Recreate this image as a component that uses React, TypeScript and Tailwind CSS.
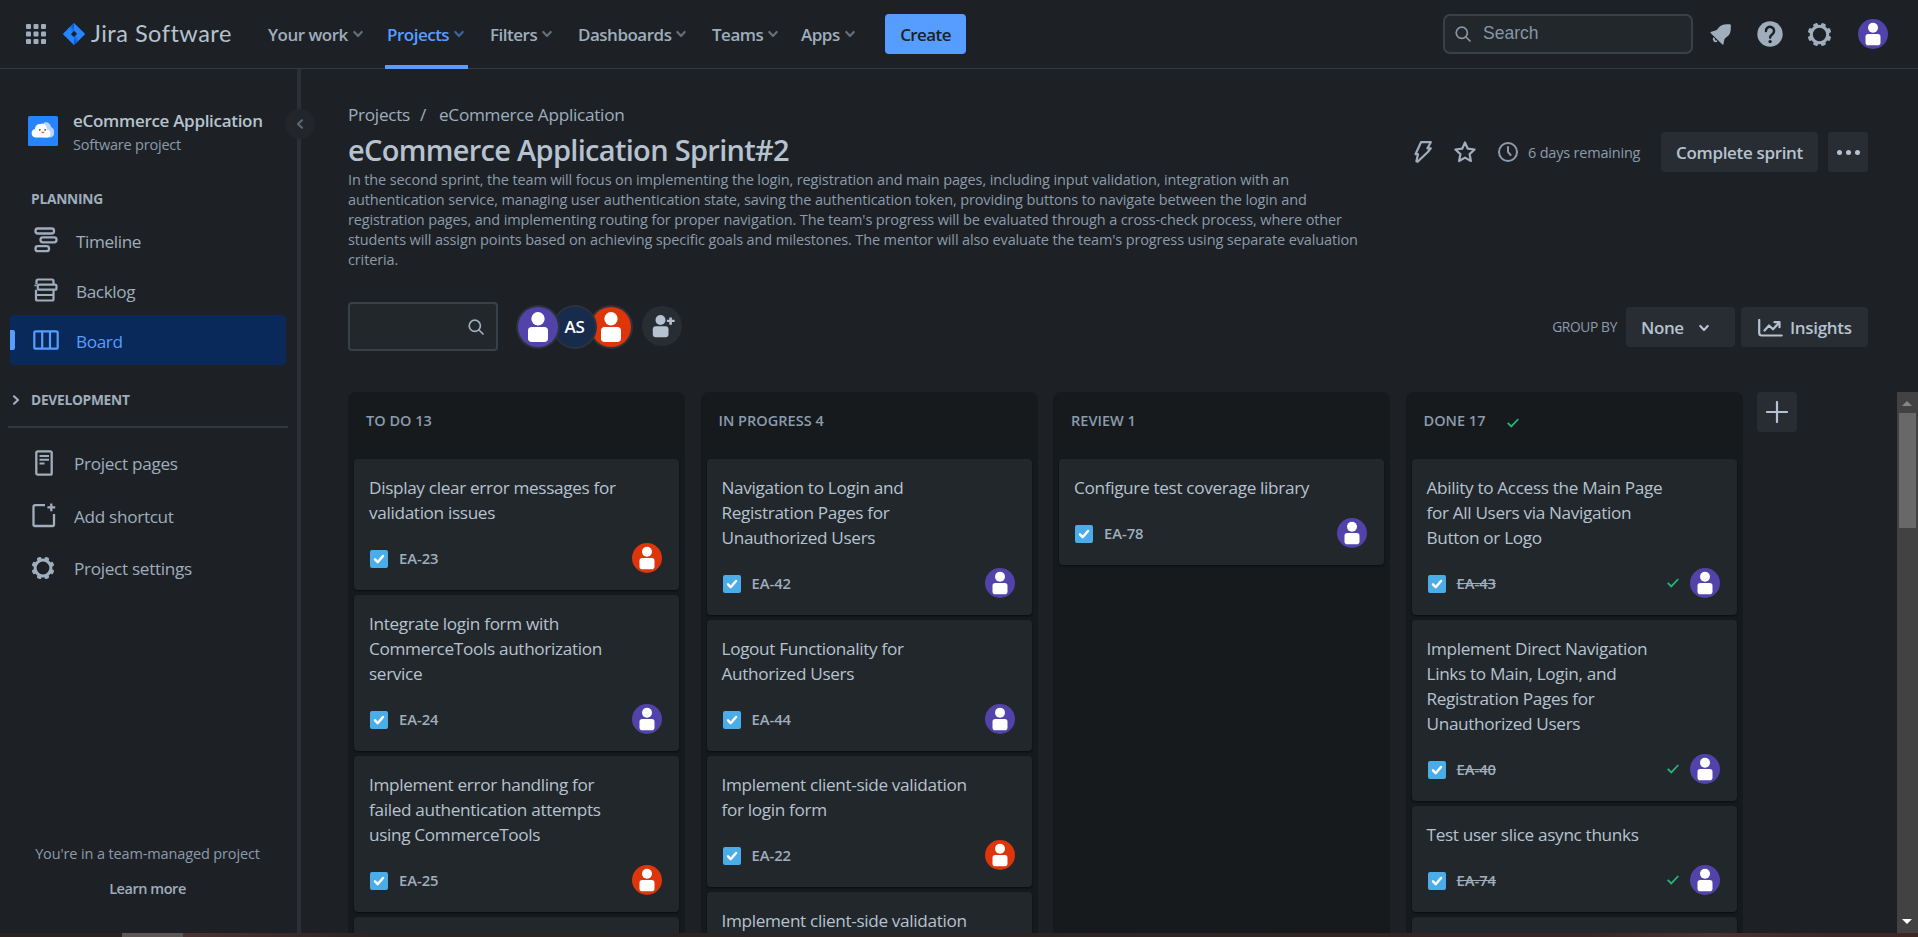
import React from 'react';

type Tone = 'purple' | 'red';

interface Issue {
  lines: string[];
  id: string;
  tone?: Tone;
}

interface BoardColumn {
  title: string;
  done?: boolean;
  issues: Issue[];
}

const columns: BoardColumn[] = [
  {
    title: 'TO DO 13',
    issues: [
      { lines: ['Display clear error messages for', 'validation issues'], id: 'EA-23', tone: 'red' },
      { lines: ['Integrate login form with', 'CommerceTools authorization', 'service'], id: 'EA-24', tone: 'purple' },
      { lines: ['Implement error handling for', 'failed authentication attempts', 'using CommerceTools'], id: 'EA-25', tone: 'red' },
      { lines: [''], id: '' },
    ],
  },
  {
    title: 'IN PROGRESS 4',
    issues: [
      { lines: ['Navigation to Login and', 'Registration Pages for', 'Unauthorized Users'], id: 'EA-42', tone: 'purple' },
      { lines: ['Logout Functionality for', 'Authorized Users'], id: 'EA-44', tone: 'purple' },
      { lines: ['Implement client-side validation', 'for login form'], id: 'EA-22', tone: 'red' },
      { lines: ['Implement client-side validation'], id: '' },
    ],
  },
  {
    title: 'REVIEW 1',
    issues: [{ lines: ['Configure test coverage library'], id: 'EA-78', tone: 'purple' }],
  },
  {
    title: 'DONE 17',
    done: true,
    issues: [
      { lines: ['Ability to Access the Main Page', 'for All Users via Navigation', 'Button or Logo'], id: 'EA-43', tone: 'purple' },
      {
        lines: ['Implement Direct Navigation', 'Links to Main, Login, and', 'Registration Pages for', 'Unauthorized Users'],
        id: 'EA-40',
        tone: 'purple',
      },
      { lines: ['Test user slice async thunks'], id: 'EA-74', tone: 'purple' },
      { lines: [''], id: '' },
    ],
  },
];

function Avatar({ tone, className = '' }: { tone: Tone; className?: string }) {
  return (
    <svg viewBox="0 0 30 30" className={`shrink-0 ${className}`}>
      <circle cx="15" cy="15" r="15" fill={tone === 'purple' ? '#5243aa' : '#de350b'} />
      <circle cx="15" cy="8.8" r="5" fill="#fff" />
      <rect x="7.5" y="15" width="15" height="11.2" rx="2.8" fill="#fff" />
    </svg>
  );
}

function Chevron({ className = '' }: { className?: string }) {
  return (
    <svg viewBox="0 0 10 8" className={`h-[8px] w-[10px] shrink-0 ${className}`} fill="none" stroke="currentColor" strokeWidth="2.2" strokeLinecap="round" strokeLinejoin="round">
      <path d="M1.3 2l3.7 4 3.7-4" />
    </svg>
  );
}

function SearchIcon({ className = '' }: { className?: string }) {
  return (
    <svg viewBox="0 0 16 16" className={`h-4 w-4 shrink-0 ${className}`} fill="none" stroke="currentColor" strokeWidth="1.7" strokeLinecap="round">
      <circle cx="6.8" cy="6.8" r="5.6" />
      <path d="M11 11l4 4" />
    </svg>
  );
}

function GearIcon({ className = '' }: { className?: string }) {
  return (
    <svg viewBox="0 0 24 24" className={`shrink-0 ${className}`} fill="currentColor">
      <g>
        {[22.5, 67.5, 112.5, 157.5, 202.5, 247.5, 292.5, 337.5].map((angle) => (
          <rect key={angle} x="9.7" y="0.6" width="4.6" height="4.6" rx="1.3" transform={`rotate(${angle} 12 12)`} />
        ))}
      </g>
      <circle cx="12" cy="12" r="7.9" fill="none" stroke="currentColor" strokeWidth="3" />
    </svg>
  );
}

function GreenCheck() {
  return (
    <svg viewBox="0 0 12 10" className="h-[10px] w-[12px] shrink-0" fill="none" stroke="#27b47a" strokeWidth="1.8">
      <path d="M0.7 4.8l3.6 3.6L11.3 1" />
    </svg>
  );
}

function TaskIcon() {
  return (
    <svg viewBox="0 0 18 18" className="relative top-px h-[18px] w-[18px] shrink-0">
      <rect width="18" height="18" rx="2" fill="#4bade8" />
      <path d="M5 9.3l2.7 2.9L13 6" fill="none" stroke="#fff" strokeWidth="2.5" strokeLinecap="round" strokeLinejoin="round" />
    </svg>
  );
}

function IssueCard({ issue, done }: { issue: Issue; done?: boolean }) {
  return (
    <article className="mb-[5px] shrink-0 rounded-[4px] bg-[#22272b] pt-4 pr-[17px] pb-[17px] pl-4 shadow-[0_1px_2px_rgba(3,4,4,0.6)]">
      <div className="-ml-px text-[17.2px] leading-[25px] tracking-[-0.34px] text-[#b6c2cf]">
        {issue.lines.map((line, i) => (
          <div key={i} className="h-[25px] whitespace-nowrap">
            {line}
          </div>
        ))}
      </div>
      {issue.id && (
        <div className="mt-[18px] flex h-[30px] items-center">
          <TaskIcon />
          <span className={`ml-[11px] text-[14.8px] font-semibold tracking-[-0.04px] text-[#9fadbc] ${done ? 'line-through' : ''}`}>{issue.id}</span>
          <div className="ml-auto flex items-center gap-[11px]">
            {done && <GreenCheck />}
            {issue.tone && <Avatar tone={issue.tone} className="h-[30px] w-[30px]" />}
          </div>
        </div>
      )}
    </article>
  );
}

function TopBar() {
  return (
    <header className="flex h-[69px] shrink-0 items-center border-b border-[#323940] text-[#9fadbc]">
      <svg viewBox="0 0 20 20" className="ml-[26px] h-5 w-5 shrink-0" fill="currentColor">
        {[0, 7.5, 15].map((y) => [0, 7.5, 15].map((x) => <rect key={`${x}-${y}`} x={x} y={y} width="5" height="5" rx="1" />))}
      </svg>
      <svg viewBox="0 0 22 22" className="ml-[17px] h-[22px] w-[22px] shrink-0">
        <defs>
          <linearGradient id="jira-a" x1="0.9" y1="0" x2="0.3" y2="0.6">
            <stop offset="0.2" stopColor="#0a55c9" />
            <stop offset="1" stopColor="#2684ff" />
          </linearGradient>
          <linearGradient id="jira-b" x1="0.1" y1="1" x2="0.7" y2="0.4">
            <stop offset="0.2" stopColor="#0a55c9" />
            <stop offset="1" stopColor="#2684ff" />
          </linearGradient>
        </defs>
        <path d="M11 0L21.5 10.2a1.1 1.1 0 010 1.6L11 22 .5 11.8a1.1 1.1 0 010-1.6zM11 7.8L7.8 11l3.2 3.2 3.2-3.2z" fill="#2684ff" fillRule="evenodd" />
        <path d="M11 0v7.8L7.8 11 4.6 6.3z" fill="url(#jira-a)" />
        <path d="M11 22v-7.800l3.200-3.200 3.200 4.700z" fill="url(#jira-b)" />
      </svg>
      <span className="-mt-[2px] ml-[6px] w-[177px] shrink-0 font-['Lato',sans-serif] text-[23.5px] leading-[26px] tracking-[0.5px] text-[#b6c2cf]">Jira Software</span>
      <nav className="grid h-full grid-cols-[119px_103px_88px_134px_89px_84px] text-[17px] font-semibold tracking-[-0.5px]">
        {['Your work', 'Projects', 'Filters', 'Dashboards', 'Teams', 'Apps'].map((label) => (
          <div key={label} className={`relative flex h-full items-center ${label === 'Projects' ? 'text-[#579dff]' : ''}`}>
            <span className="mt-px">{label}</span>
            <Chevron className="ml-[5px] opacity-55" />
            {label === 'Projects' && <span className="absolute -bottom-px -left-[2px] h-1 w-[83px] bg-[#579dff]" />}
          </div>
        ))}
      </nav>
      <button className="h-10 w-[81px] rounded-[4px] bg-[#579dff] pt-px text-[17px] font-semibold tracking-[-0.6px] text-[#1d2125]">Create</button>
      <div className="ml-auto flex h-10 w-[250px] items-center rounded-[7px] border-2 border-[#38414a] bg-[#22272b] pl-[10px] text-[#8696a7]">
        <SearchIcon />
        <span className="ml-[12px] -mt-[3px] font-['Liberation_Sans',Arial,sans-serif] text-[17.5px] leading-5">Search</span>
      </div>
      <svg viewBox="0 0 22 22" className="ml-[17px] h-[22px] w-[22px] shrink-0" fill="currentColor">
        <path d="M12.400 21.500L0.800 10.200C0.300 9.700 0.500 9 1.200 8.800L5.500 7.600C7 7.100 8 5.500 9.300 4C12 1 15.500 1.400 18.600 1.200C20 0.900 21.300 1.500 20.900 3C20.500 5.500 21.500 9.400 18.500 12.500C17 14 15 14.800 14.400 16.500L13.400 21.200C13.300 21.800 12.800 21.900 12.400 21.500Z" />
        <path d="M3.300 14.300a3 3 0 004.200 4.200l-1.300-1.400-1.300.3.300-1.400z" />
      </svg>
      <svg viewBox="0 0 26 26" className="ml-[25px] h-[26px] w-[26px] shrink-0">
        <circle cx="13" cy="13" r="12.700" fill="currentColor" />
        <path d="M8.900 10a4.100 4.100 0 116.300 3.400c-1.300.9-2.100 1.400-2.100 3.200" fill="none" stroke="#1d2125" strokeWidth="2.500" strokeLinecap="round" />
        <circle cx="13.100" cy="20.600" r="1.700" fill="#1d2125" />
      </svg>
      <GearIcon className="ml-[24px] h-[25px] w-[25px]" />
      <Avatar tone="purple" className="mr-[30px] ml-[26px] h-[30px] w-[30px]" />
    </header>
  );
}

function Sidebar() {
  return (
    <aside className="flex w-[297px] shrink-0 flex-col text-[#9fadbc]">
      <div className="mt-[42px] ml-7 flex h-[44px]">
        <svg viewBox="0 0 30 30" className="mt-[5px] h-[30px] w-[30px] shrink-0">
          <rect width="30" height="30" rx="1.500" fill="#2684ff" />
          <path d="M16 6.500a5.300 5.300 0 017 4.500 5 5 0 013 5.500 4.500 4.500 0 01-3.500 5H15z" fill="#b9d6ff" />
          <path d="M7.200 21.500a4.400 4.400 0 01-.2-8.600A5 5 0 0112.300 8a4 4 0 015.700 2 5 5 0 01.8 3.500 4.200 4.200 0 013.700 4.200 3.900 3.900 0 01-4 3.800z" fill="#fff" />
          <circle cx="11.800" cy="13.800" r="0.900" fill="#344563" />
          <circle cx="17.200" cy="13.800" r="0.900" fill="#344563" />
          <path d="M12.600 15.700h4.400l-2.200 1.900z" fill="#ff5630" />
        </svg>
        <div className="ml-[15px]">
          <div className="text-[17px] leading-5 font-semibold tracking-[-0.3px] whitespace-nowrap text-[#b6c2cf]">eCommerce Application</div>
          <div className="mt-1 text-[14.500px] leading-5 tracking-[-0.2px] text-[#8c9bab]">Software project</div>
        </div>
      </div>
      <div className="mt-[34px] ml-[31px] h-[26px] text-[13.750px] leading-5 font-bold tracking-[-0.250px]">PLANNING</div>
      <div className="flex h-[50px] items-center pl-[34px] text-[17.200px] tracking-[-0.4px]">
        <svg viewBox="0 0 24 26" className="-mt-px h-[26px] w-6" fill="none" stroke="currentColor" strokeWidth="2.300">
          <rect x="1.500" y="1.500" width="18.500" height="5" rx="2.300" />
          <rect x="6.500" y="10.300" width="16" height="5" rx="2.300" />
          <rect x="1.500" y="19.200" width="13.500" height="5" rx="2.300" />
        </svg>
        <span className="mt-[3px] ml-[18px]">Timeline</span>
      </div>
      <div className="flex h-[50px] items-center pl-[34px] text-[17.200px] tracking-[-0.4px]">
        <svg viewBox="0 0 24 24" className="h-6 w-6" fill="none" stroke="currentColor" strokeWidth="2.200">
          <path d="M2.500 6.500V3a1.500 1.500 0 011.500-1.500h14A1.500 1.500 0 0119.500 3v3.500" />
          <rect x="3.800" y="6.700" width="18.700" height="5" rx="1.500" />
          <path d="M1.500 6.800v1.500M2 11.700v9.300a1.500 1.500 0 001.500 1.500h14.500a1.500 1.500 0 001.500-1.500v-9.300M2 17h17.500" />
        </svg>
        <span className="mt-[3px] ml-[18px]">Backlog</span>
      </div>
      <div className="relative mr-[11px] ml-[10px] flex h-[50px] items-center rounded-[4px] bg-[#09295a] pl-[23px] text-[17.200px] tracking-[-0.4px] text-[#579dff]">
        <span className="absolute left-0 h-5 w-[5px] rounded-r-[2px] bg-[#579dff]" />
        <svg viewBox="0 0 26 20" className="h-5 w-[26px]" fill="none" stroke="currentColor" strokeWidth="2.200">
          <rect x="1.300" y="1.300" width="23.400" height="17.400" rx="1.500" />
          <path d="M9.200 1.300v17.400M17 1.300v17.400" />
        </svg>
        <span className="mt-[3px] ml-[17px]">Board</span>
      </div>
      <div className="mt-[25px] flex h-5 items-center text-[13.750px] leading-5 font-bold tracking-[-0.280px]">
        <Chevron className="mr-[10px] ml-[11px] -rotate-90" />
        DEVELOPMENT
      </div>
      <div className="mt-4 mr-[9px] ml-2 h-[2px] bg-[#2f373f]" />
      <div className="mt-[10px] flex h-[52.500px] items-center pl-[35px] text-[17.200px] tracking-[-0.320px]">
        <svg viewBox="0 0 18 26" className="-mt-[2px] h-[26px] w-[18px]" fill="none" stroke="currentColor" strokeWidth="2.300">
          <rect x="1.300" y="1.300" width="15.400" height="23.400" rx="1.500" />
          <path d="M4.500 6h9.500M4.500 9.800h9.500M4.500 13.600h5" strokeWidth="2" />
        </svg>
        <span className="ml-[21px]">Project pages</span>
      </div>
      <div className="flex h-[52.500px] items-center pl-8 text-[17.200px] tracking-[-0.320px]">
        <svg viewBox="0 0 24 26" className="-mt-[3px] h-[26px] w-6" fill="none" stroke="currentColor" strokeWidth="2.300">
          <path d="M13 3.200H3a1.500 1.500 0 00-1.500 1.500v17.800A1.500 1.500 0 003 24h17.500a1.500 1.500 0 001.500-1.500V12" />
          <path d="M19.300 1.500v7.800M15.400 5.400h7.800" />
        </svg>
        <span className="ml-[18px]">Add shortcut</span>
      </div>
      <div className="flex h-[52.500px] items-center pl-[31px] text-[17.200px] tracking-[-0.320px]">
        <GearIcon className="-mt-[3px] h-6 w-6" />
        <span className="ml-[19px]">Project settings</span>
      </div>
      <div className="mt-auto pr-[2px] pb-[34px] text-center text-[14.500px] leading-5 tracking-[-0.130px]">
        <div className="text-[#8c9bab]">You're in a team-managed project</div>
        <div className="mt-[15px] font-semibold tracking-[-0.450px]">Learn more</div>
      </div>
    </aside>
  );
}

function BoardHeader() {
  return (
    <div className="flex flex-col pt-[33px] pr-[50px] pl-[47px]">
      <div className="flex h-[25px] items-center text-[17.200px] tracking-[-0.280px] text-[#9fadbc]">
        <span className="w-[72px]">Projects</span>
        <span className="w-[19px]">/</span>
        <span>eCommerce Application</span>
      </div>
      <div className="mt-[5px] flex h-[138px] items-start">
        <div className="whitespace-nowrap">
          <h1 className="h-[35px] text-[29px] leading-[36px] font-semibold tracking-[-0.690px] text-[#b6c2cf]">eCommerce Application Sprint#2</h1>
          <p className="mt-[3px] text-[14.500px] leading-5 tracking-[-0.130px] text-[#8c9bab]">
            In the second sprint, the team will focus on implementing the login, registration and main pages, including input validation, integration with an
            <br />
            authentication service, managing user authentication state, saving the authentication token, providing buttons to navigate between the login and
            <br />
            registration pages, and implementing routing for proper navigation. The team's progress will be evaluated through a cross-check process, where other
            <br />
            students will assign points based on achieving specific goals and milestones. The mentor will also evaluate the team's progress using separate evaluation
            <br />
            criteria.
          </p>
        </div>
        <div className="ml-auto flex h-10 items-center text-[#9fadbc]">
          <svg viewBox="0 0 18 22" className="h-[22px] w-[18px]" fill="none" stroke="currentColor" strokeWidth="2.200" strokeLinejoin="round">
            <path d="M7 1.200h9.800L13.500 7.300h3.300L13.800 11 3.600 20.800l-1.200-.6 1.600-7H1.500z" />
          </svg>
          <svg viewBox="0 0 22 22" className="ml-[22px] h-[22px] w-[22px]" fill="none" stroke="currentColor" strokeWidth="2.200" strokeLinejoin="round">
            <path d="M11 1.500l2.800 6.200 6.800.8-5 4.600 1.300 6.900-5.900-3.400L5.100 20l1.300-6.900-5-4.600 6.800-.8z" />
          </svg>
          <svg viewBox="0 0 20 20" className="ml-[22px] h-5 w-5 text-[#8c9bab]" fill="none" stroke="currentColor" strokeWidth="2" strokeLinecap="round">
            <circle cx="10" cy="10" r="9" />
            <path d="M10 5v5l2.600 3" />
          </svg>
          <span className="mt-[2px] ml-[10px] w-[133px] text-[14.500px] tracking-[-0.200px] whitespace-nowrap text-[#8c9bab]">6 days remaining</span>
          <button className="h-10 w-[157px] rounded-[4px] bg-[#282d33] pt-px text-[17px] font-semibold tracking-[-0.330px] text-[#b6c2cf]">Complete sprint</button>
          <button className="ml-[10px] flex h-10 w-10 items-center justify-center gap-[4px] rounded-[4px] bg-[#282d33]">
            <span className="h-[5px] w-[5px] rounded-full bg-[#b6c2cf]" />
            <span className="h-[5px] w-[5px] rounded-full bg-[#b6c2cf]" />
            <span className="h-[5px] w-[5px] rounded-full bg-[#b6c2cf]" />
          </button>
        </div>
      </div>
      <div className="mt-8 flex h-[49px] items-center">
        <div className="flex h-[49px] w-[150px] items-center justify-end rounded-[4px] border-2 border-[#38414a] bg-[#22272b] pr-[12px] text-[#9fadbc]">
          <SearchIcon />
        </div>
        <div className="mt-px ml-[18px] flex">
          <div className="relative z-30 h-11 w-11 rounded-full bg-[#2c333a] p-[2px]">
            <Avatar tone="purple" className="h-10 w-10" />
          </div>
          <div className="relative z-20 -ml-[7.500px] h-11 w-11 rounded-full bg-[#2c333a] p-[2px]">
            <div className="flex h-10 w-10 items-center justify-center rounded-full bg-[#172b4d] text-[17px] font-semibold tracking-[-0.300px] text-white">AS</div>
          </div>
          <div className="relative z-10 -ml-[7.500px] h-11 w-11 rounded-full bg-[#2c333a] p-[2px]">
            <Avatar tone="red" className="h-10 w-10" />
          </div>
        </div>
        <div className="-mt-px ml-[9px] flex h-10 w-10 items-center justify-center rounded-full bg-[#282d33] text-[#b6c2cf]">
          <svg viewBox="0 0 40 40" className="h-10 w-10" fill="currentColor">
            <circle cx="18.500" cy="14" r="5" />
            <rect x="10.800" y="20.200" width="15.700" height="11" rx="3" />
            <path d="M27.300 13.700v-2.300h2.600v2.300h2.700v2.400h-2.700v2.600h-2.600v-2.600h-2.400v-2.400z" />
          </svg>
        </div>
        <div className="mt-px ml-auto flex h-10 items-center">
          <span className="text-[13.750px] tracking-[-0.350px] text-[#8c9bab]">GROUP BY</span>
          <button className="ml-[9px] flex h-10 w-[109px] items-center rounded-[4px] bg-[#282d33] pt-px pl-[15px] text-[17px] font-semibold tracking-[-0.400px] text-[#b6c2cf]">
            None
            <Chevron className="ml-[15px]" />
          </button>
          <button className="ml-[6px] flex h-10 w-[127px] items-center rounded-[4px] bg-[#282d33] pt-px pl-[17px] text-[17px] font-semibold tracking-[-0.320px] text-[#b6c2cf]">
            <svg viewBox="0 0 25 18" className="mr-[7px] h-[18px] w-[25px]" fill="none" stroke="currentColor" strokeWidth="2.200" strokeLinecap="round" strokeLinejoin="round">
              <path d="M1.200 1v13a2.500 2.500 0 002.500 2.500h20" />
              <path d="M6.500 11.500l4.500-5 4 3.800 6-6.500" />
              <path d="M16.500 3.200h5v5" />
            </svg>
            Insights
          </button>
        </div>
      </div>
    </div>
  );
}

function Board() {
  return (
    <div className="mt-[41px] flex min-h-0 flex-1 overflow-hidden pl-[47px]">
      <div className="flex min-h-0 gap-[15.500px]">
        {columns.map((column) => (
          <section key={column.title} className="flex w-[337px] shrink-0 flex-col overflow-hidden rounded-t-[8px] bg-[#161a1d] px-[6px]">
            <div className="flex h-[67px] shrink-0 gap-[22px] pt-[19px] pl-3 text-[14.500px] leading-5 font-semibold tracking-[0.020px] text-[#8c9bab]">
              {column.title}
              {column.done && (
                <span className="pt-[7px]">
                  <GreenCheck />
                </span>
              )}
            </div>
            {column.issues.map((issue, i) => (
              <IssueCard key={i} issue={issue} done={column.done} />
            ))}
          </section>
        ))}
        <button className="-ml-px flex h-10 w-10 items-center justify-center rounded-[4px] bg-[#282d33] text-[#b6c2cf]">
          <svg viewBox="0 0 22 22" className="h-[22px] w-[22px]" stroke="currentColor" strokeWidth="2.200" strokeLinecap="round">
            <path d="M11 1v20M1 11h20" />
          </svg>
        </button>
      </div>
      <div className="ml-auto flex w-[21px] shrink-0 flex-col items-center bg-[#424242] pr-px">
        <span className="mt-[9px] h-0 w-0 border-x-[5px] border-b-[5px] border-x-transparent border-b-[#868686]" />
        <span className="mt-[7px] h-[115px] w-[17px] bg-[#686868]" />
        <span className="mt-auto mb-[9px] h-0 w-0 border-x-[5px] border-t-[5px] border-x-transparent border-t-white" />
      </div>
    </div>
  );
}

export default function App() {
  return (
    <div className="flex h-[937px] w-[1918px] flex-col overflow-hidden bg-[#1d2125] font-['Open_Sans','Noto_Sans',sans-serif]">
      <TopBar />
      <div className="flex min-h-0 flex-1">
        <Sidebar />
        <div className="relative w-1 shrink-0 bg-[#2c3036]">
          <span className="absolute top-10 -left-[12px] flex h-[30px] w-[30px] items-center justify-center rounded-full bg-[#22262a] text-[#5c6874]">
            <Chevron className="rotate-90" />
          </span>
        </div>
        <main className="flex min-w-0 flex-1 flex-col">
          <BoardHeader />
          <Board />
        </main>
      </div>
      <div className="flex h-1 shrink-0 bg-gradient-to-r from-[#2a2322] via-[#2b2424] to-[#3f2625]">
        <span className="ml-[122px] w-[61px] bg-[#5c5654]" />
        <span className="w-[200px] bg-gradient-to-r from-[#4d3331] to-transparent" />
        <span className="ml-[1210px] w-[240px] bg-gradient-to-r from-transparent via-[#4d3331] to-transparent" />
      </div>
    </div>
  );
}
